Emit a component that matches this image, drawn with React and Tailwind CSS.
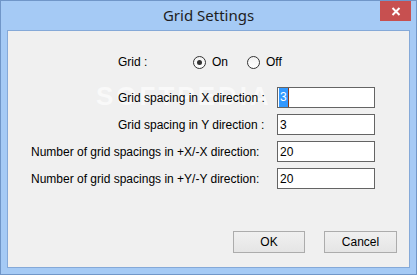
import React from 'react';

function Radio({ checked, label }) {
    return (
        <div className="flex items-center">
            <div className="w-[13px] h-[13px] rounded-full border border-[#333333] bg-gradient-to-b from-[#f2f2f2] to-[#ffffff] flex items-center justify-center">
                {checked && <div className="w-[5px] h-[5px] rounded-full bg-[#333333]"></div>}
            </div>
            <span className="ml-[6px]">{label}</span>
        </div>
    );
}

function Row({ label, value, indent, selected }) {
    return (
        <div className="flex items-center h-[21px]">
            <div className={"w-[269px] text-black " + (indent ? "pl-[110px]" : "pl-[23px]")}>{label}</div>
            <div className="w-[98px] h-[21px] border border-[#646464] bg-white flex items-center pl-[1px]">
                {selected ? (
                    <span className="bg-[#3399ff] text-white h-[19px] leading-[19px] px-[1px] border-r border-[#8a3a1a]">{value}</span>
                ) : (
                    <span className="px-[1px]">{value}</span>
                )}
            </div>
        </div>
    );
}

export default function App() {
    return (
        <div className="w-[417px] h-[275px] bg-[#a5caf5] border border-[#7096c8] flex flex-col relative" style={{ fontFamily: '"Liberation Sans", Arial, sans-serif' }}>
            {/* title bar */}
            <div className="h-[29px] flex items-center justify-center">
                <span className="text-[15px] text-[#1e1e1e] -mt-[1px]" style={{ fontFamily: '"Noto Sans", "Open Sans", sans-serif' }}>Grid Settings</span>
            </div>
            <div className="absolute top-0 right-[5px] w-[31px] h-[20px] bg-[#c75050] flex items-center justify-center">
                <svg width="10" height="9" viewBox="0 0 10 9">
                    <path d="M1.5 1 L8.5 8 M8.5 1 L1.5 8" stroke="white" strokeWidth="2" />
                </svg>
            </div>

            <div className="flex-1 px-[6px] pb-[6px]">
                <div className="h-full bg-[#f0f0f0] border border-[#85a9d8] flex flex-col text-[12px] text-black relative">
                    <div className="absolute left-[88px] top-[46px] text-[26px] font-bold tracking-[3px] text-white opacity-60 pointer-events-none">SOFTPEDIA</div>

                    {/* grid on/off */}
                    <div className="flex items-center h-[20px] mt-[21px] pl-[110px]">
                        <span className="w-[75px]">Grid :</span>
                        <div className="flex items-center gap-[19px]">
                            <Radio checked label="On" />
                            <Radio label="Off" />
                        </div>
                    </div>

                    <div className="flex flex-col gap-[6px] mt-[15px] relative">
                        <Row label="Grid spacing in X direction :" value="3" indent selected />
                        <Row label="Grid spacing in Y direction :" value="3" indent />
                        <Row label="Number of grid spacings in +X/-X direction:" value="20" />
                        <Row label="Number of grid spacings in +Y/-Y direction:" value="20" />
                    </div>

                    <div className="flex justify-end gap-[19px] pr-[12px] mt-[42px]">
                        <button className="w-[72px] h-[22px] border border-[#acacac] bg-gradient-to-b from-[#f0f0f0] to-[#e5e5e5] text-[12px]">OK</button>
                        <button className="w-[73px] h-[22px] border border-[#acacac] bg-gradient-to-b from-[#f0f0f0] to-[#e5e5e5] text-[12px]">Cancel</button>
                    </div>
                </div>
            </div>
        </div>
    );
}
